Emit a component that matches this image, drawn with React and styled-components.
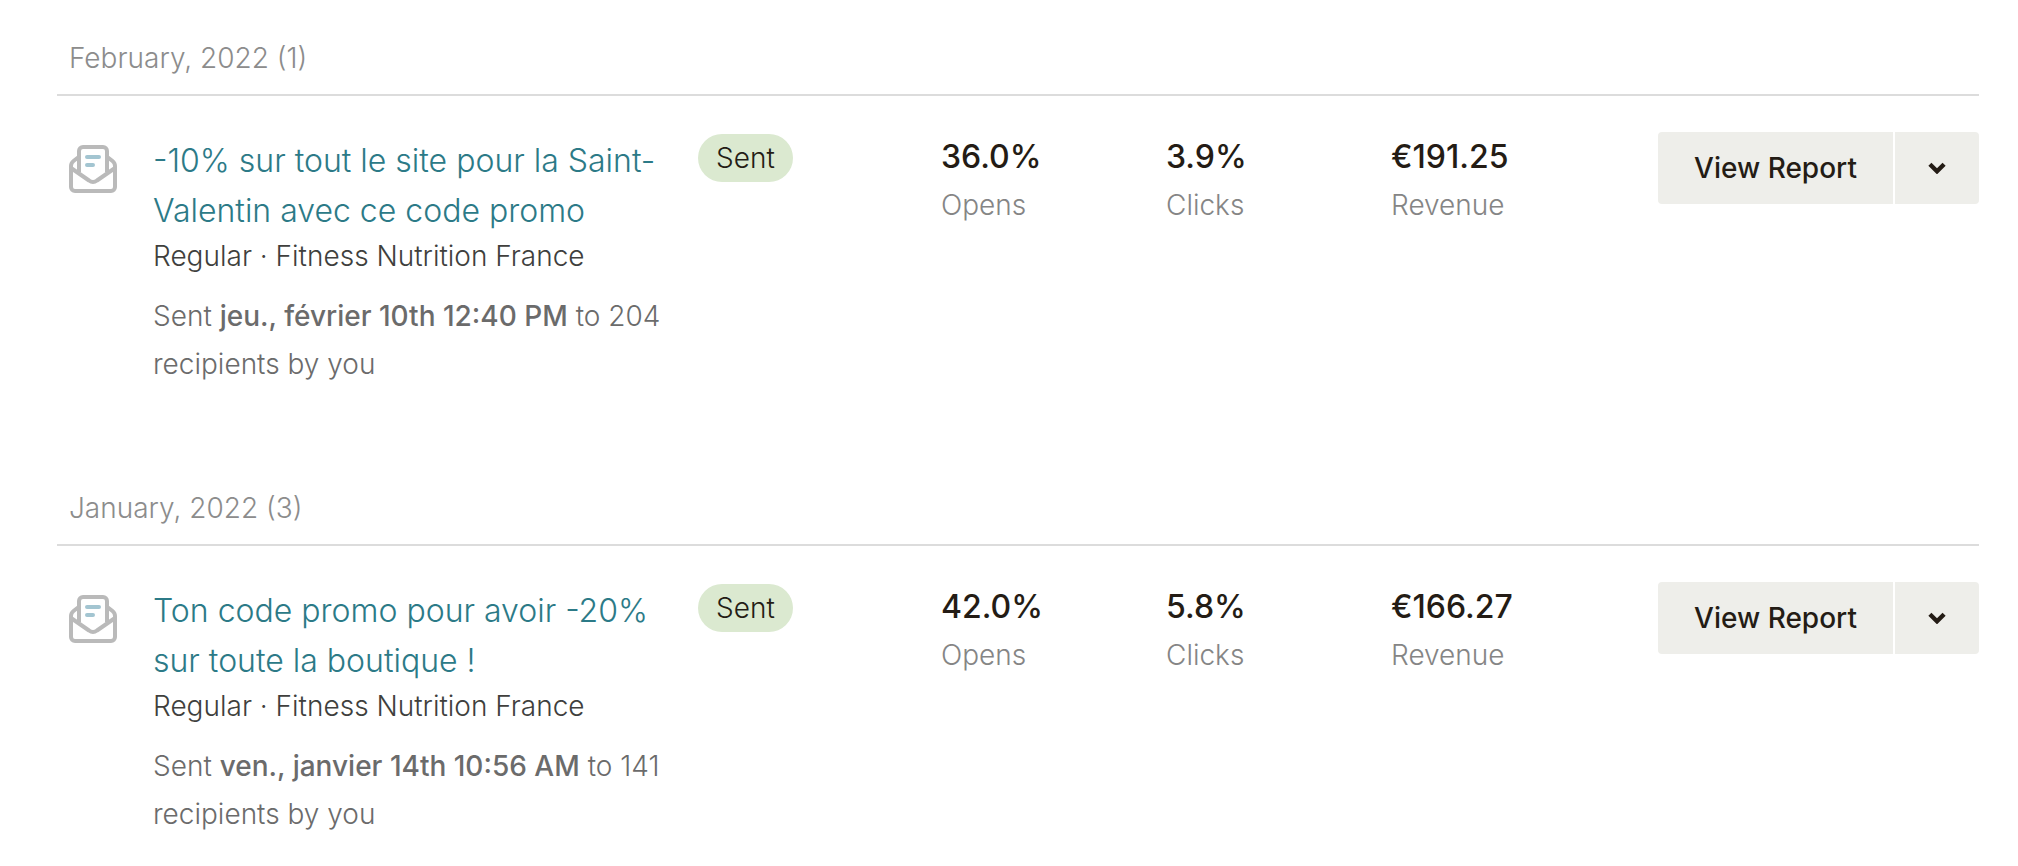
import React from "react"
import styled, { createGlobalStyle } from "styled-components"

const months = [
  {
    label: "February, 2022 (1)",
    campaigns: [
      {
        title: "-10% sur tout le site pour la Saint-Valentin avec ce code promo",
        audience: "Regular · Fitness Nutrition France",
        date: "jeu., février 10th 12:40 PM",
        recipients: 204,
        status: "Sent",
        stats: [
          { value: "36.0%", name: "Opens" },
          { value: "3.9%", name: "Clicks" },
          { value: "€191.25", name: "Revenue" },
        ],
      },
    ],
  },
  {
    label: "January, 2022 (3)",
    campaigns: [
      {
        title: "Ton code promo pour avoir -20% sur toute la boutique !",
        audience: "Regular · Fitness Nutrition France",
        date: "ven., janvier 14th 10:56 AM",
        recipients: 141,
        status: "Sent",
        stats: [
          { value: "42.0%", name: "Opens" },
          { value: "5.8%", name: "Clicks" },
          { value: "€166.27", name: "Revenue" },
        ],
      },
    ],
  },
]

const CampaignIcon = () => (
  <Envelope viewBox="0 0 48 48" aria-hidden="true">
    <path d="M9 12.5L4.5 16Q2 18 2 21V42a4 4 0 0 0 4 4H42a4 4 0 0 0 4-4V21Q46 18 43.5 16L39 12.5" />
    <path d="M10 27V6a4 4 0 0 1 4-4H34a4 4 0 0 1 4 4V27" />
    <path d="M2 23L20 35.5q4 3 8 0L46 23" />
    <Lines d="M18 12H30M18 20H24" />
  </Envelope>
)

const Campaign = ({ title, audience, date, recipients, status, stats }) => {
  return (
    <Row>
      <CampaignIcon />
      <Details>
        <Title href="#">{title}</Title>
        <Audience>{audience}</Audience>
        <SentInfo>
          Sent <b>{date}</b> to {recipients} recipients by you
        </SentInfo>
      </Details>
      <div>
        <Badge>{status}</Badge>
      </div>
      {stats.map((stat) => (
        <div key={stat.name}>
          <StatValue>{stat.value}</StatValue>
          <StatName>{stat.name}</StatName>
        </div>
      ))}
      <Actions>
        <ReportButton type="button">View Report</ReportButton>
        <MenuButton type="button" aria-label="More actions">
          <Chevron viewBox="0 0 16 11" aria-hidden="true">
            <path d="M1.5 2L8 8.5L14.5 2" />
          </Chevron>
        </MenuButton>
      </Actions>
    </Row>
  )
}

const App = () => {
  return (
    <>
      <GlobalStyle />
      <Page>
        {months.map((month) => (
          <section key={month.label}>
            <MonthTitle>{month.label}</MonthTitle>
            <List>
              {month.campaigns.map((campaign) => (
                <Campaign key={campaign.title} {...campaign} />
              ))}
            </List>
          </section>
        ))}
      </Page>
    </>
  )
}

export default App

const GlobalStyle = createGlobalStyle`
  * {
    box-sizing: border-box;
  }
  body {
    margin: 0;
    background-color: #fff;
    font-family: Inter, "Liberation Sans", sans-serif;
    font-size: 28px;
    line-height: 48px;
    -webkit-font-smoothing: antialiased;
  }
`

const Page = styled.main`
  padding: 0 39px 0 57px;
`

const MonthTitle = styled.h2`
  margin: 0;
  padding: 34px 12px 12px;
  border-bottom: 2px solid #dcdcdc;
  font-size: 28px;
  font-weight: 300;
  color: #8c8c8c;
`

const List = styled.ul`
  margin: 0;
  padding: 0;
  list-style: none;
`

const Row = styled.li`
  display: grid;
  grid-template-columns: 84px 545fr 243fr 225fr 225fr 267fr auto;
  align-items: start;
  padding: 36px 0 62px 12px;
`

const Envelope = styled.svg`
  width: 48px;
  height: 48px;
  margin-top: 13px;
  fill: none;
  stroke: #bababa;
  stroke-width: 4;
  stroke-linejoin: round;
`

const Lines = styled.path`
  stroke: #a3c5d1;
  stroke-linecap: round;
`

const Details = styled.div`
  padding: 4px 32px 0 0;
`

const Title = styled.a`
  display: block;
  font-size: 32px;
  font-weight: 300;
  line-height: 50px;
  color: #2c7a87;
  text-decoration: none;
`

const Audience = styled.p`
  margin: 0 0 16px;
  font-weight: 300;
  line-height: 40px;
  color: #403f3d;
`

const SentInfo = styled.p`
  margin: 0;
  font-weight: 300;
  color: #6b6b6b;
  b {
    font-weight: 500;
  }
`

const Badge = styled.span`
  display: inline-block;
  margin-top: 2px;
  padding: 0 18px;
  border-radius: 24px;
  font-weight: 300;
  color: #241c15;
  background-color: #dbe9d0;
`

const StatValue = styled.div`
  font-size: 32px;
  font-weight: 500;
  line-height: 50px;
  color: #241c15;
`

const StatName = styled.div`
  font-weight: 300;
  line-height: 46px;
  color: #858585;
`

const Actions = styled.div`
  display: flex;
  gap: 2px;
`

const Button = styled.button`
  height: 72px;
  border: 0;
  color: #241c15;
  background-color: #eeeeea;
  font-family: inherit;
  font-size: 28px;
  font-weight: 500;
  cursor: pointer;
`

const ReportButton = styled(Button)`
  width: 235px;
  padding: 0;
  border-radius: 4px 0 0 4px;
`

const MenuButton = styled(Button)`
  display: flex;
  align-items: center;
  justify-content: center;
  width: 84px;
  padding: 0;
  border-radius: 0 4px 4px 0;
`

const Chevron = styled.svg`
  width: 18px;
  height: 12px;
  fill: none;
  stroke: currentColor;
  stroke-width: 4;
`
